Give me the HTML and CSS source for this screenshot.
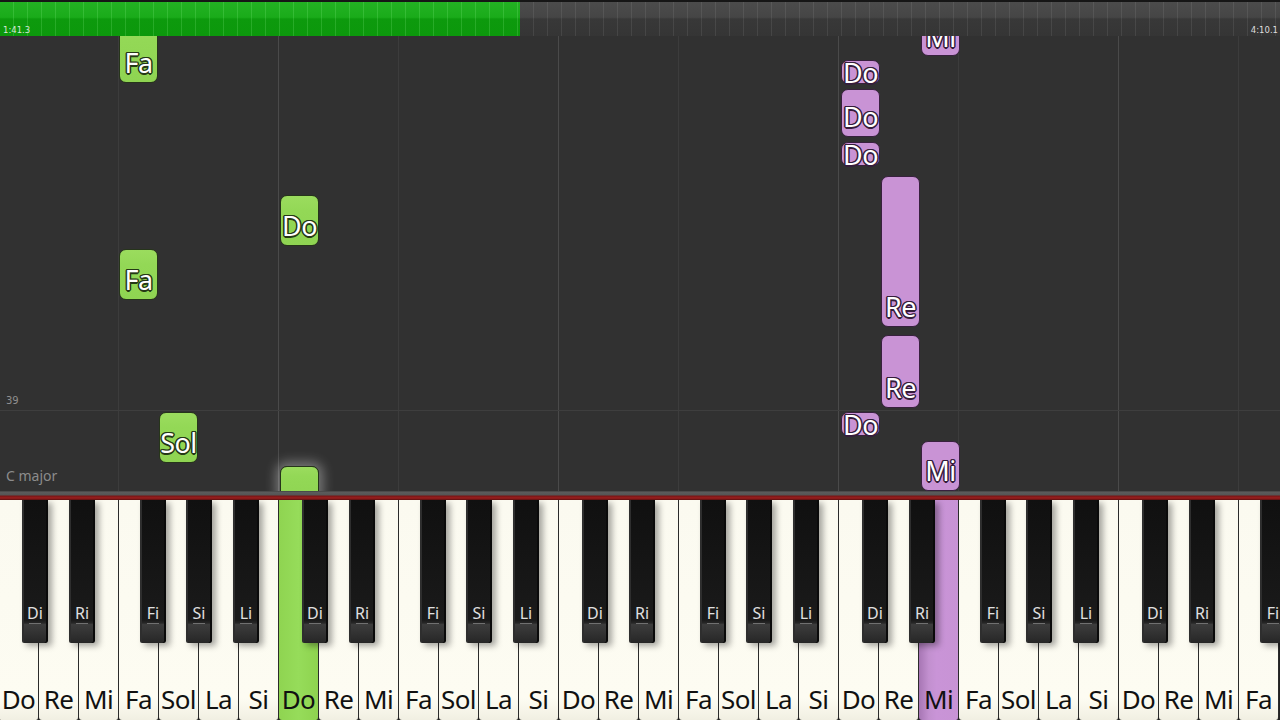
FILE: index.html
```html
<!DOCTYPE html>
<html>
<head>
<meta charset="utf-8">
<link rel="stylesheet" href="styles.css">
</head>
<body>
<div class="app">
  <div class="progress">
    <div class="done"></div>
    <div class="rest"></div>
    <span class="time left">1:41.3</span>
    <span class="time right">4:10.1</span>
  </div>
  <div class="roll">
    <div class="measure-line"></div>
    <span class="measure-num">39</span>
    <span class="key-name">C major</span>

    <div class="note g" style="left:119px;top:-14px;height:61px"><span>Fa</span></div>
    <div class="note g" style="left:280px;top:159px;height:51px"><span>Do</span></div>
    <div class="note g" style="left:119px;top:213px;height:51px"><span>Fa</span></div>
    <div class="note g" style="left:159px;top:376px;height:51px"><span>Sol</span></div>
    <div class="note g glow" style="left:280px;top:430px;height:34px"><span></span></div>

    <div class="note p" style="left:921px;top:-20px;height:40px"><span>Mi</span></div>
    <div class="note p" style="left:841px;top:24px;height:24px"><span>Do</span></div>
    <div class="note p" style="left:841px;top:53px;height:48px"><span>Do</span></div>
    <div class="note p" style="left:841px;top:106px;height:24px"><span>Do</span></div>
    <div class="note p" style="left:881px;top:140px;height:151px"><span>Re</span></div>
    <div class="note p" style="left:881px;top:299px;height:73px"><span>Re</span></div>
    <div class="note p" style="left:841px;top:376px;height:24px"><span>Do</span></div>
    <div class="note p" style="left:921px;top:405px;height:50px"><span>Mi</span></div>
  </div>
  <div class="divider"></div>
  <div class="keyboard">
    <div class="octave">
      <div class="wk"><span>Do</span></div><div class="wk"><span>Re</span></div><div class="wk"><span>Mi</span></div><div class="wk"><span>Fa</span></div><div class="wk"><span>Sol</span></div><div class="wk"><span>La</span></div><div class="wk"><span>Si</span></div>
      <div class="bk di"><span>Di</span></div><div class="bk ri"><span>Ri</span></div><div class="bk fi"><span>Fi</span></div><div class="bk si"><span>Si</span></div><div class="bk li"><span>Li</span></div>
    </div>
    <div class="octave">
      <div class="wk green"><span>Do</span></div><div class="wk"><span>Re</span></div><div class="wk"><span>Mi</span></div><div class="wk"><span>Fa</span></div><div class="wk"><span>Sol</span></div><div class="wk"><span>La</span></div><div class="wk"><span>Si</span></div>
      <div class="bk di"><span>Di</span></div><div class="bk ri"><span>Ri</span></div><div class="bk fi"><span>Fi</span></div><div class="bk si"><span>Si</span></div><div class="bk li"><span>Li</span></div>
    </div>
    <div class="octave">
      <div class="wk"><span>Do</span></div><div class="wk"><span>Re</span></div><div class="wk"><span>Mi</span></div><div class="wk"><span>Fa</span></div><div class="wk"><span>Sol</span></div><div class="wk"><span>La</span></div><div class="wk"><span>Si</span></div>
      <div class="bk di"><span>Di</span></div><div class="bk ri"><span>Ri</span></div><div class="bk fi"><span>Fi</span></div><div class="bk si"><span>Si</span></div><div class="bk li"><span>Li</span></div>
    </div>
    <div class="octave">
      <div class="wk"><span>Do</span></div><div class="wk"><span>Re</span></div><div class="wk purple"><span>Mi</span></div><div class="wk"><span>Fa</span></div><div class="wk"><span>Sol</span></div><div class="wk"><span>La</span></div><div class="wk"><span>Si</span></div>
      <div class="bk di"><span>Di</span></div><div class="bk ri"><span>Ri</span></div><div class="bk fi"><span>Fi</span></div><div class="bk si"><span>Si</span></div><div class="bk li"><span>Li</span></div>
    </div>
    <div class="octave">
      <div class="wk"><span>Do</span></div><div class="wk"><span>Re</span></div><div class="wk"><span>Mi</span></div><div class="wk"><span>Fa</span></div>
      <div class="bk di"><span>Di</span></div><div class="bk ri"><span>Ri</span></div><div class="bk fi"><span>Fi</span></div>
    </div>
  </div>
</div>
</body>
</html>
```
FILE: styles.css
```css
* { box-sizing: border-box; margin: 0; padding: 0; }
html, body { width: 1280px; height: 720px; overflow: hidden; background: #313131; }
body { font-family: "Noto Sans", "Open Sans", sans-serif; }

.app { display: flex; flex-direction: column; width: 1280px; height: 720px; }

.progress {
  position: relative;
  height: 36px;
  display: flex;
  border-top: 2px solid #161616;
  flex-shrink: 0;
}
.progress .done {
  width: 520px;
  background:
    repeating-linear-gradient(to right, transparent 0 13px, rgba(160,255,160,0.18) 13px 14px),
    linear-gradient(to bottom, #23b223 0, #1aab1a 45%, #0d9a0d 50%, #0c980c 100%);
}
.progress .rest {
  flex: 1;
  background:
    repeating-linear-gradient(to right, transparent 0 13px, rgba(255,255,255,0.08) 13px 14px),
    linear-gradient(to bottom, #4c4c4c 0, #454545 45%, #383838 50%, #353535 100%);
}
.time {
  position: absolute;
  bottom: 1px;
  font-size: 8.5px;
  color: #d8e8d8;
  font-family: "DejaVu Sans", sans-serif;
}
.time.left { left: 3px; }
.time.right { right: 2px; color: #ddd; }

.roll {
  position: relative;
  height: 455px;
  flex-shrink: 0;
  overflow: hidden;
  background-color: #313131;
  background-image: linear-gradient(to right,
    transparent 0 118px, #3c3c3c 118px 119px,
    transparent 119px 278px, #4a4a4a 278px 279px,
    transparent 279px);
  background-size: 280px 100%;
  background-repeat: repeat-x;
}
.measure-line {
  position: absolute;
  left: 0; right: 0;
  top: 374px;
  height: 1px;
  background: #3e3e3e;
}
.measure-num {
  position: absolute;
  left: 6px; top: 359px;
  font-size: 10px;
  color: #8f8f8f;
  font-family: "DejaVu Sans", sans-serif;
}
.key-name {
  position: absolute;
  left: 6px; top: 430px;
  font-size: 14px;
  color: #8c8c8c;
}

.note {
  position: absolute;
  width: 39px;
  border-radius: 7px;
  border: 1.5px solid #2a3a1a;
  display: flex;
  flex-direction: column;
  justify-content: flex-end;
}
.note span {
  height: 40px;
  max-height: 100%;
  display: flex;
  align-items: center;
  justify-content: center;
  font-size: 27px;
  line-height: 1;
  color: #fff;
  letter-spacing: -0.5px;
}
.note.g {
  background: linear-gradient(to bottom, #9bdc5e 0, #93d856 30%, #8fd452 100%);
  border-color: #26351a;
}
.note.g span {
  text-shadow: 1.5px 0 0 #253816, -1.5px 0 0 #253816, 0 1.5px 0 #253816, 0 -1.5px 0 #253816,
    1px 1px 0 #253816, -1px -1px 0 #253816, 1px -1px 0 #253816, -1px 1px 0 #253816;
}
.note.p {
  background: #c993d5;
  border-color: #38203e;
}
.note.p span {
  text-shadow: 1.5px 0 0 #351d3b, -1.5px 0 0 #351d3b, 0 1.5px 0 #351d3b, 0 -1.5px 0 #351d3b,
    1px 1px 0 #351d3b, -1px -1px 0 #351d3b, 1px -1px 0 #351d3b, -1px 1px 0 #351d3b;
}
.note.glow {
  box-shadow: 0 0 12px 4px rgba(255,255,255,0.35);
}

.divider {
  height: 9px;
  flex-shrink: 0;
  background: linear-gradient(to bottom, #3a3a3a 0, #5c5c5c 1px, #555 4px, #7a1515 5px, #9a1f1f 7px, #5a0f0f 9px);
}

.keyboard {
  flex: 1;
  display: flex;
  margin-left: -1px;
  overflow: hidden;
  background: #222;
}
.octave {
  position: relative;
  display: flex;
  flex-shrink: 0;
}
.wk {
  width: 40px;
  height: 220px;
  flex-shrink: 0;
  background: linear-gradient(to bottom, #fbfaf0 0, #fdfcf2 90%, #f1efe2 100%);
  border-right: 1px solid #2b2b2b;
  border-radius: 0 0 3px 3px;
  display: flex;
  align-items: flex-end;
  justify-content: center;
  padding-bottom: 4px;
}
.wk span {
  font-size: 26px;
  line-height: 34px;
  color: #111;
  letter-spacing: -0.6px;
}
.wk.green { background: linear-gradient(to right, #8fd451 0, #96dc5a 50%, #8ed34f 100%); }
.wk.purple { background: linear-gradient(to right, #a776b4 0, #c290cf 25%, #c994d7 45%, #c893d5 100%); }

.bk {
  position: absolute;
  top: 0;
  width: 26px;
  height: 143px;
  border-radius: 0 0 2px 2px;
  background:
    linear-gradient(to right, transparent 0 7px, #707070 7px 19px, transparent 19px) 0 123px / 100% 1px no-repeat,
    linear-gradient(to bottom, #101010 0, #1a1a1a 84%, #262626 86%, #3c3c3c 87%, #343434 92%, #262626 100%);
  box-shadow: inset 2px 0 0 #2e2e2e, inset -2px 0 0 #0a0a0a, 4px 3px 6px rgba(0,0,0,0.35);
  display: flex;
  justify-content: center;
  align-items: flex-end;
  padding-bottom: 20px;
}
.bk span {
  font-size: 16px;
  line-height: 20px;
  color: #e0e0e0;
}
.bk.di { left: 23px; }
.bk.ri { left: 70px; }
.bk.fi { left: 141px; }
.bk.si { left: 187px; }
.bk.li { left: 234px; }
```
